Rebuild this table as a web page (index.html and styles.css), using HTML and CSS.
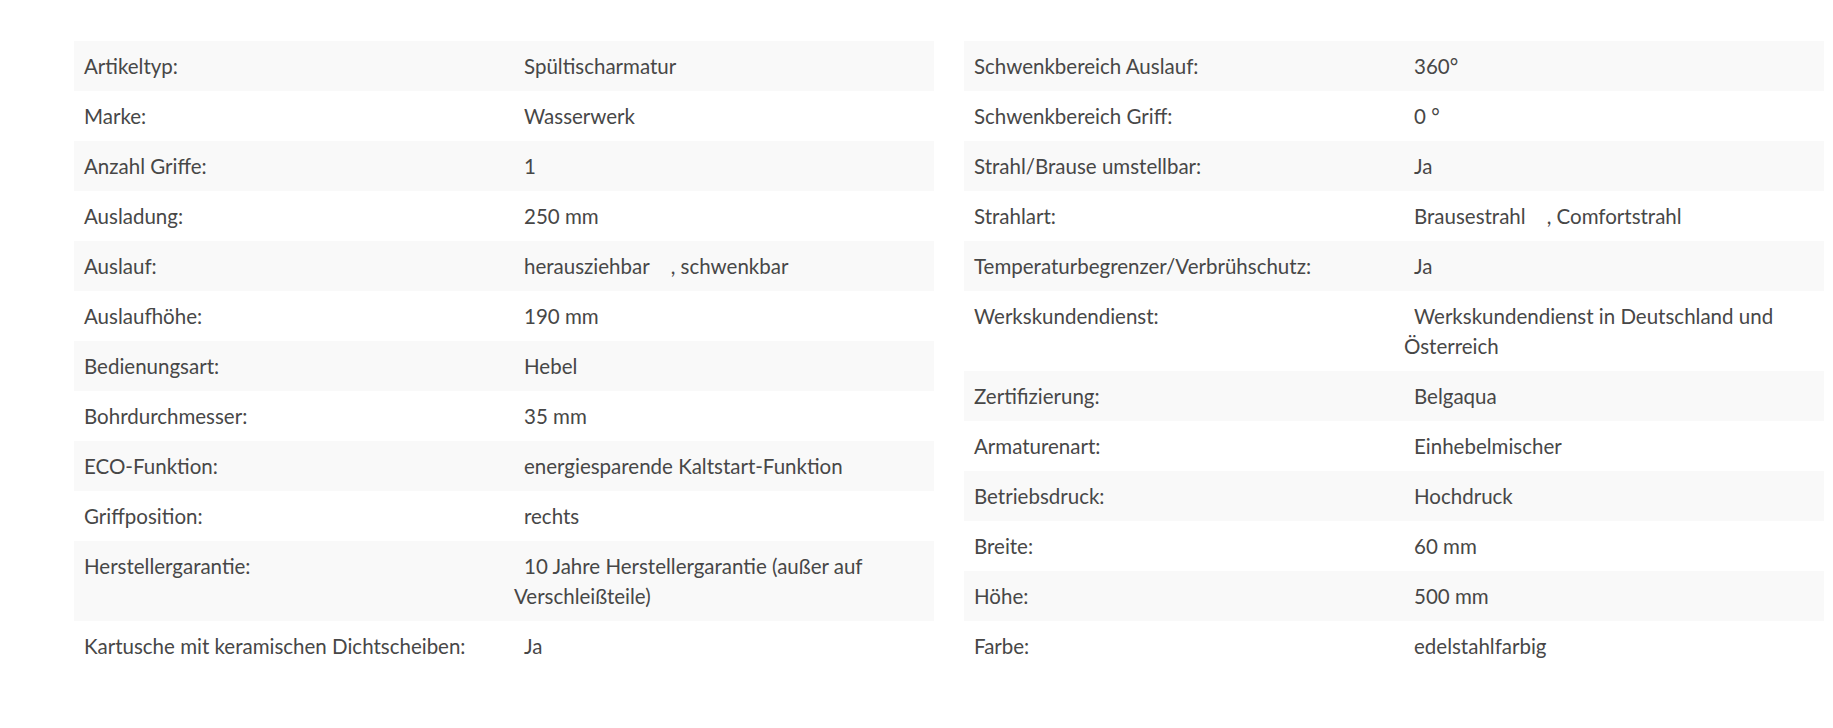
FILE: index.html
```html
<!DOCTYPE html>
<html lang="de">
<head>
<meta charset="utf-8">
<title>Technische Daten</title>
<link rel="stylesheet" href="styles.css">
</head>
<body>
<div class="specs">
  <table class="spec-table">
    <tr><td class="label">Artikeltyp:</td><td class="value">Spültischarmatur</td></tr>
    <tr><td class="label">Marke:</td><td class="value">Wasserwerk</td></tr>
    <tr><td class="label">Anzahl Griffe:</td><td class="value">1</td></tr>
    <tr><td class="label">Ausladung:</td><td class="value">250 mm</td></tr>
    <tr><td class="label">Auslauf:</td><td class="value">herausziehbar<span class="gap"></span>, schwenkbar</td></tr>
    <tr><td class="label">Auslaufhöhe:</td><td class="value">190 mm</td></tr>
    <tr><td class="label">Bedienungsart:</td><td class="value">Hebel</td></tr>
    <tr><td class="label">Bohrdurchmesser:</td><td class="value">35 mm</td></tr>
    <tr><td class="label">ECO-Funktion:</td><td class="value">energiesparende Kaltstart-Funktion</td></tr>
    <tr><td class="label">Griffposition:</td><td class="value">rechts</td></tr>
    <tr><td class="label">Herstellergarantie:</td><td class="value">10 Jahre Herstellergarantie (außer auf Verschleißteile)</td></tr>
    <tr><td class="label">Kartusche mit keramischen Dichtscheiben:</td><td class="value">Ja</td></tr>
  </table>
  <table class="spec-table">
    <tr><td class="label">Schwenkbereich Auslauf:</td><td class="value">360°</td></tr>
    <tr><td class="label">Schwenkbereich Griff:</td><td class="value">0 °</td></tr>
    <tr><td class="label">Strahl/Brause umstellbar:</td><td class="value">Ja</td></tr>
    <tr><td class="label">Strahlart:</td><td class="value">Brausestrahl<span class="gap"></span>, Comfortstrahl</td></tr>
    <tr><td class="label">Temperaturbegrenzer/Verbrühschutz:</td><td class="value">Ja</td></tr>
    <tr><td class="label">Werkskundendienst:</td><td class="value">Werkskundendienst in Deutschland und Österreich</td></tr>
    <tr><td class="label">Zertifizierung:</td><td class="value">Belgaqua</td></tr>
    <tr><td class="label">Armaturenart:</td><td class="value">Einhebelmischer</td></tr>
    <tr><td class="label">Betriebsdruck:</td><td class="value">Hochdruck</td></tr>
    <tr><td class="label">Breite:</td><td class="value">60 mm</td></tr>
    <tr><td class="label">Höhe:</td><td class="value">500 mm</td></tr>
    <tr><td class="label">Farbe:</td><td class="value">edelstahlfarbig</td></tr>
  </table>
</div>
</body>
</html>
```
FILE: styles.css
```css
html, body {
  margin: 0;
  padding: 0;
  background: #ffffff;
}
body {
  font-family: "Lato", "Liberation Sans", sans-serif;
  font-size: 20.5px;
  color: #474747;
}
.specs {
  display: flex;
  align-items: flex-start;
  gap: 30px;
  padding: 41px 0 0 74px;
}
.spec-table {
  width: 860px;
  border-collapse: collapse;
  table-layout: fixed;
}
.spec-table tr:nth-child(odd) {
  background: #f9f9f9;
}
.spec-table td {
  width: 50%;
  padding: 10px 10px;
  line-height: 30px;
  vertical-align: top;
}
.spec-table .value {
  text-indent: 10px;
}
.gap {
  display: inline-block;
  width: 21px;
}
```
